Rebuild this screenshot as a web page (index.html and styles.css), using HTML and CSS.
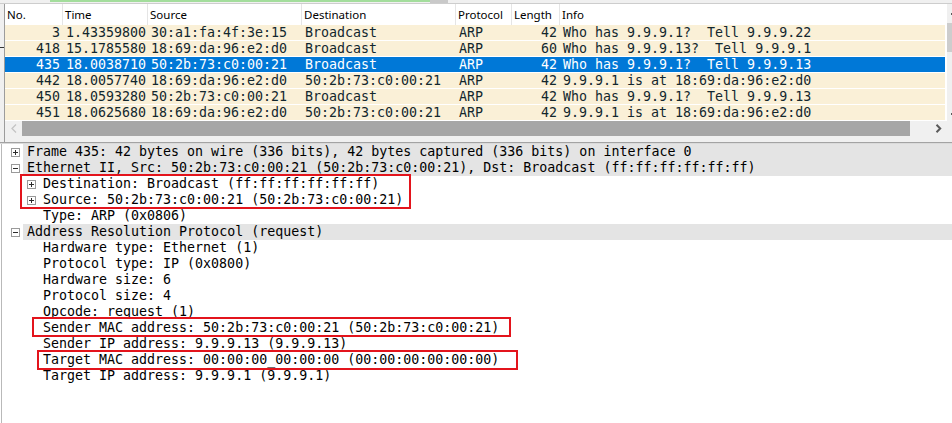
FILE: index.html
```html
<!DOCTYPE html>
<html>
<head>
<meta charset="utf-8">
<link rel="stylesheet" href="styles.css">
</head>
<body>
<div class="app">
  <div class="topbar"><div class="topgap"></div><div class="filter"></div><div class="filterbtn"></div></div>
  <div class="listwrap">
    <div class="gutter"><div class="gmark"></div></div>
    <div class="listcol">
      <div class="table">
        <div class="hdr">
          <div class="hc">No.</div><div class="hc">Time</div><div class="hc">Source</div><div class="hc">Destination</div><div class="hc">Protocol</div><div class="hc">Length</div><div class="hc last">Info</div>
        </div>
        <div class="row"><span class="r">3</span><span>1.43359800</span><span>30:a1:fa:4f:3e:15</span><span>Broadcast</span><span>ARP</span><span class="r">42</span><span>Who has 9.9.9.1?  Tell 9.9.9.22</span></div>
        <div class="row"><span class="r">418</span><span>15.1785580</span><span>18:69:da:96:e2:d0</span><span>Broadcast</span><span>ARP</span><span class="r">60</span><span>Who has 9.9.9.13?  Tell 9.9.9.1</span></div>
        <div class="row sel"><span class="r">435</span><span>18.0038710</span><span>50:2b:73:c0:00:21</span><span>Broadcast</span><span>ARP</span><span class="r">42</span><span>Who has 9.9.9.1?  Tell 9.9.9.13</span></div>
        <div class="row"><span class="r">442</span><span>18.0057740</span><span>18:69:da:96:e2:d0</span><span>50:2b:73:c0:00:21</span><span>ARP</span><span class="r">42</span><span>9.9.9.1 is at 18:69:da:96:e2:d0</span></div>
        <div class="row"><span class="r">450</span><span>18.0593280</span><span>50:2b:73:c0:00:21</span><span>Broadcast</span><span>ARP</span><span class="r">42</span><span>Who has 9.9.9.1?  Tell 9.9.9.13</span></div>
        <div class="row"><span class="r">451</span><span>18.0625680</span><span>18:69:da:96:e2:d0</span><span>50:2b:73:c0:00:21</span><span>ARP</span><span class="r">42</span><span>9.9.9.1 is at 18:69:da:96:e2:d0</span></div>
      </div>
      <div class="hscroll">
        <div class="harrow"><svg width="6" height="9" viewBox="0 0 6 9"><path d="M5 0.5 L1 4.5 L5 8.5" fill="none" stroke="#c4c4c4" stroke-width="1.3"/></svg></div>
        <div class="hthumb"></div>
        <div class="htrack"></div>
        <div class="harrow"><svg width="7" height="9" viewBox="0 0 7 9"><path d="M1.5 0.8 L5.2 4.5 L1.5 8.2" fill="none" stroke="#5a5a5a" stroke-width="2"/></svg></div>
      </div>
    </div>
    <div class="vscroll">
      <div class="varrow"><div class="vmark"></div></div>
      <div class="vthumb"></div>
      <div class="vtrack"></div>
      <div class="varrow"><div class="vmark"></div></div>
    </div>
  </div>
  <div class="splitter"></div>
  <div class="details">
    <div class="drow l0"><svg class="box" width="9" height="9" viewBox="0 0 9 9"><rect x="0.5" y="0.5" width="8" height="8" fill="#fff" stroke="#9a9a9a"/><path d="M2 4.5 H7 M4.5 2 V7" stroke="#2c2c2c"/></svg><span class="dt top">Frame 435: 42 bytes on wire (336 bits), 42 bytes captured (336 bits) on interface 0</span></div>
    <div class="drow l0"><svg class="box" width="9" height="9" viewBox="0 0 9 9"><rect x="0.5" y="0.5" width="8" height="8" fill="#fff" stroke="#9a9a9a"/><path d="M2 4.5 H7" stroke="#2c2c2c"/></svg><span class="dt top">Ethernet II, Src: 50:2b:73:c0:00:21 (50:2b:73:c0:00:21), Dst: Broadcast (ff:ff:ff:ff:ff:ff)</span></div>
    <div class="drow l1"><svg class="box" width="9" height="9" viewBox="0 0 9 9"><rect x="0.5" y="0.5" width="8" height="8" fill="#fff" stroke="#9a9a9a"/><path d="M2 4.5 H7 M4.5 2 V7" stroke="#2c2c2c"/></svg><span class="dt">Destination: Broadcast (ff:ff:ff:ff:ff:ff)</span></div>
    <div class="drow l1"><svg class="box" width="9" height="9" viewBox="0 0 9 9"><rect x="0.5" y="0.5" width="8" height="8" fill="#fff" stroke="#9a9a9a"/><path d="M2 4.5 H7 M4.5 2 V7" stroke="#2c2c2c"/></svg><span class="dt">Source: 50:2b:73:c0:00:21 (50:2b:73:c0:00:21)</span></div>
    <div class="drow l1"><span class="nobox"></span><span class="dt">Type: ARP (0x0806)</span></div>
    <div class="drow l0"><svg class="box" width="9" height="9" viewBox="0 0 9 9"><rect x="0.5" y="0.5" width="8" height="8" fill="#fff" stroke="#9a9a9a"/><path d="M2 4.5 H7" stroke="#2c2c2c"/></svg><span class="dt top">Address Resolution Protocol (request)</span></div>
    <div class="drow l1"><span class="nobox"></span><span class="dt">Hardware type: Ethernet (1)</span></div>
    <div class="drow l1"><span class="nobox"></span><span class="dt">Protocol type: IP (0x0800)</span></div>
    <div class="drow l1"><span class="nobox"></span><span class="dt">Hardware size: 6</span></div>
    <div class="drow l1"><span class="nobox"></span><span class="dt">Protocol size: 4</span></div>
    <div class="drow l1"><span class="nobox"></span><span class="dt">Opcode: request (1)</span></div>
    <div class="drow l1"><span class="nobox"></span><span class="dt">Sender MAC address: 50:2b:73:c0:00:21 (50:2b:73:c0:00:21)</span></div>
    <div class="drow l1"><span class="nobox"></span><span class="dt">Sender IP address: 9.9.9.13 (9.9.9.13)</span></div>
    <div class="drow l1"><span class="nobox"></span><span class="dt">Target MAC address: 00:00:00_00:00:00 (00:00:00:00:00:00)</span></div>
    <div class="drow l1"><span class="nobox"></span><span class="dt">Target IP address: 9.9.9.1 (9.9.9.1)</span></div>
  </div>
  <div class="mark mark-eth"></div>
  <div class="mark mark-sender"></div>
  <div class="mark mark-target"></div>
</div>
</body>
</html>
```

FILE: styles.css
```css
html, body {
  margin: 0;
  padding: 0;
  background: #ffffff;
}
body {
  width: 952px;
  height: 423px;
  overflow: hidden;
  font-family: "DejaVu Sans Mono", "Liberation Mono", monospace;
}
.app {
  position: relative;
  width: 952px;
  height: 423px;
  display: flex;
  flex-direction: column;
  overflow: hidden;
}

/* top strip */
.topbar {
  height: 3px;
  border-bottom: 1px solid #cdcdcd;
  background: #f0f0f0;
  display: flex;
  align-items: flex-start;
  flex: none;
}
.topgap { width: 50px; }
.filter { width: 380px; height: 2px; background: #a3dd9c; }
.filterbtn { width: 18px; height: 3px; background: #c9c9c9; }

/* packet list */
.listwrap {
  display: flex;
  height: 138px;
  flex: none;
  background: #f0f0f0;
}
.gutter {
  width: 4px;
  flex: none;
  background: #f0f0f0;
  position: relative;
}
.gmark {
  margin-top: 43px;
  height: 1px;
  width: 4px;
  background: #333;
}
.listcol {
  width: 942px;
  flex: none;
  border-left: 1px solid #9c9c9c;
  display: flex;
  flex-direction: column;
}
.table {
  background: #ffffff;
  border-right: 2px solid #ffffff;
  height: 117px;
  font-size: 13.3px;
  color: #12272e;
}
.hdr, .row {
  display: grid;
  grid-template-columns: 58px 85px 154px 154px 56px 48px 1fr;
}
.hdr {
  height: 21px;
  font-family: "Noto Sans", "Open Sans", sans-serif;
  font-size: 11.5px;
  color: #000;
}
.hc {
  line-height: 21px;
  padding-left: 2px;
  border-right: 1px solid #e5e5e5;
  white-space: nowrap;
}
.hc.last { border-right: none; }
.row {
  height: 15px;
  line-height: 15px;
  border-bottom: 1px solid #ffffff;
  background: #faf0d7;
  white-space: pre;
}
.row span {
  padding-left: 3px;
  overflow: hidden;
}
.row span.r {
  text-align: right;
  padding-left: 0;
  padding-right: 3px;
}
.row.sel {
  background: #0078d7;
  color: #ffffff;
}

/* horizontal scrollbar */
.hscroll {
  display: flex;
  height: 15px;
  margin-bottom: 6px;
  background: #f0f0f0;
}
.harrow {
  width: 17px;
  display: flex;
  align-items: center;
  justify-content: center;
  flex: none;
}
.hthumb {
  width: 888px;
  background: #a6a6a6;
  flex: none;
}
.htrack { width: 20px; flex: none; }

/* vertical scrollbar (cut off) */
.vscroll {
  width: 5px;
  flex: none;
  display: flex;
  flex-direction: column;
  background: #f0f0f0;
}
.varrow {
  height: 19px;
  display: flex;
  align-items: center;
  justify-content: flex-end;
  flex: none;
}
.vmark { width: 1px; height: 2px; background: #5a5a5a; }
.vthumb { height: 29px; background: #cdcdcd; flex: none; }
.vtrack { height: 52px; flex: none; }

.splitter {
  height: 0;
  border-top: 1px solid #a3a3a3;
  border-bottom: 1px solid #dadada;
  flex: none;
}

/* details tree */
.details {
  flex: 1;
  margin-left: 1px;
  border-left: 1px solid #b9b9b9;
  background: #ffffff;
  font-size: 13.3px;
  color: #000;
}
.drow {
  display: flex;
  align-items: center;
  height: 16px;
  line-height: 16px;
  white-space: pre;
}
.drow.l0 { padding-left: 9px; }
.drow.l1 { padding-left: 25px; }
.box { flex: none; margin-right: 3px; }
.nobox { width: 9px; margin-right: 3px; flex: none; }
.dt { padding-left: 4px; flex: 1; }
.dt.top { background: #e4e4e4; }

/* red annotation boxes (overlay) */
.mark {
  position: absolute;
  box-sizing: border-box;
  border: 2px solid #e3141c;
}
.mark-eth { left: 20px; top: 174px; width: 391px; height: 35px; }
.mark-sender { left: 32px; top: 317px; width: 479px; height: 20px; }
.mark-target { left: 37px; top: 350px; width: 481px; height: 20px; }
```
